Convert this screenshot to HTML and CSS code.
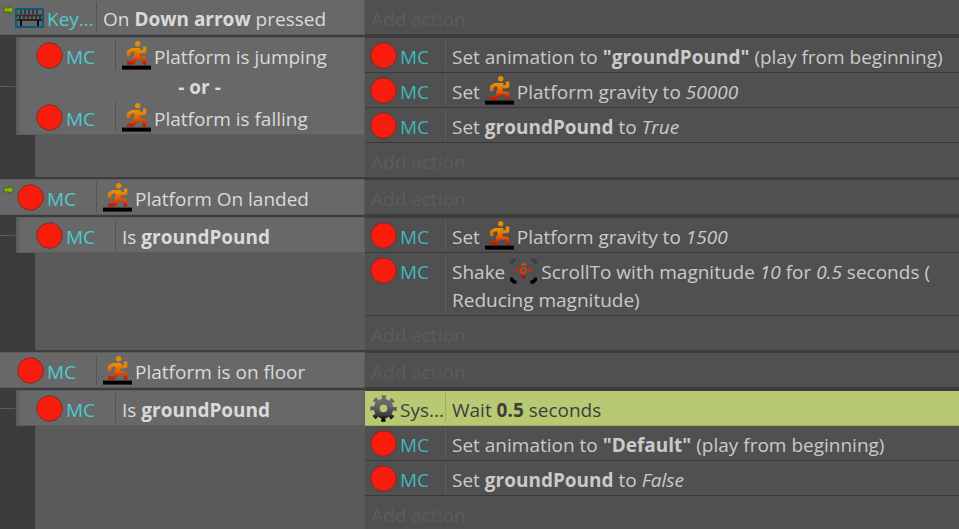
FILE: index.html
```
<!DOCTYPE html>
<html lang="en">
<head>
    <meta charset="UTF-8">
    <meta name="viewport" content="width=device-width, initial-scale=1.0">
    <title>Event Sheet</title>
    <link rel="stylesheet" href="styles.css">
</head>
<body>
    <!-- Shared icons -->
    <svg class="icon-defs" aria-hidden="true">
        <defs>
            <linearGradient id="fire" gradientUnits="userSpaceOnUse" x1="0" y1="0" x2="0" y2="25">
                <stop offset="0.35" stop-color="#ea8c00"/>
                <stop offset="0.65" stop-color="#e25a00"/>
                <stop offset="0.95" stop-color="#c40800"/>
            </linearGradient>
            <linearGradient id="steel" gradientUnits="userSpaceOnUse" x1="0" y1="0" x2="0" y2="27">
                <stop offset="0" stop-color="#6c6c6c"/>
                <stop offset="0.4" stop-color="#666"/>
                <stop offset="0.75" stop-color="#3c3c3c"/>
                <stop offset="0.9" stop-color="#000"/>
            </linearGradient>
            <linearGradient id="leaf" x1="0" y1="0" x2="0" y2="1">
                <stop offset="0" stop-color="#a4d400"/>
                <stop offset="1" stop-color="#6a9c00"/>
            </linearGradient>
        </defs>
        <symbol id="ball" viewBox="0 0 27 27">
            <circle cx="13.5" cy="13.5" r="12.8" fill="#f81c0c" stroke="#5c3030" stroke-width="0.8"/>
        </symbol>
        <symbol id="run" viewBox="0 0 29 29">
            <rect x="0" y="24.6" width="29" height="4" fill="#000"/>
            <g fill="none" stroke="url(#fire)" stroke-width="3.4" stroke-linejoin="round">
                <path d="M22.6 5.6V10.4L17 11"/>
                <path d="M6.6 15.2V10.8L9.6 8.8H18"/>
                <path d="M14 16.8L22.4 17.4V23.4"/>
                <path d="M12.8 15V19.6L10.8 21.8H5"/>
            </g>
            <path d="M11.4 7.2H18.6L17 12.6L18.4 17.4H11.2L12.6 12.6Z" fill="url(#fire)"/>
            <circle cx="15.7" cy="2.8" r="2.7" fill="#e88a00"/>
        </symbol>
        <symbol id="keyboard" viewBox="0 0 29 20">
            <rect x="1" y="1" width="27" height="18" rx="1" fill="#666" stroke="#075a78" stroke-width="2"/>
            <path d="M6 2V6M10 2V6M14 2V6M18 2V6M22 2V6" stroke="#262626" stroke-width="1.4"/>
            <path d="M2 7.4H27" stroke="#303030" stroke-width="2"/>
            <path d="M5 8V12M9 8V12M13 8V12M17 8V12M21 8V12M25 8V12" stroke="#262626" stroke-width="1.4"/>
            <path d="M2 12H27" stroke="#181818" stroke-width="1.6"/>
            <path d="M6 12V18M23 12V18" stroke="#0c0c0c" stroke-width="2"/>
        </symbol>
        <symbol id="arrow" viewBox="0 0 12 10">
            <path d="M1 3H6V1L11 5L6 9V7H1Z" fill="url(#leaf)" stroke="#46621a" stroke-width="1"/>
        </symbol>
        <symbol id="scroll" viewBox="0 0 27 27">
            <g fill="none" stroke-width="2.6">
                <path d="M1.5 6V4L4 1.8H6M21 1.8H23L25.5 4V6" stroke="#3c3c3c"/>
                <path d="M1.5 19.5V21.5L4 24H6.5M20.5 24H23L25.5 21.5V19.5" stroke="#000" stroke-width="3.4"/>
            </g>
            <circle cx="13.5" cy="12.5" r="2.6" fill="none" stroke="#e03800" stroke-width="1.8"/>
            <path d="M13.5 4L16.5 7.2H10.5Z" fill="#e05000"/>
            <path d="M13.5 21.2L16.5 18H10.5Z" fill="#c80000"/>
            <path d="M5 12.5L8.2 9.8V15.2ZM22 12.5L18.8 9.8V15.2Z" fill="#d82800"/>
        </symbol>
        <symbol id="gear" viewBox="0 0 27 27">
            <g fill="none" stroke="url(#steel)">
                <circle cx="13.5" cy="13.5" r="6.8" stroke-width="6"/>
                <circle cx="13.5" cy="13.5" r="11.2" stroke-width="4" stroke-dasharray="4.2 4.6" stroke-dashoffset="2.1"/>
            </g>
        </symbol>
    </svg>

    <main class="sheet">
        <section class="event">
            <div class="conditions">
                <div class="condition">
                    <svg class="trigger"><use href="#arrow"/></svg>
                    <div class="object"><svg class="icon keyboard"><use href="#keyboard"/></svg>Key...</div>
                    <div class="text">On <b>Down arrow</b> pressed</div>
                </div>
            </div>
            <div class="actions">
                <button class="add" type="button">Add action</button>
            </div>
        </section>

        <section class="event sub">
            <div class="side">
                <div class="branch">
                    <div class="conditions">
                        <div class="condition">
                            <div class="object"><svg class="icon"><use href="#ball"/></svg>MC</div>
                            <div class="text"><svg class="inline run"><use href="#run"/></svg>Platform is jumping</div>
                        </div>
                        <div class="or">- or -</div>
                        <div class="condition">
                            <div class="object"><svg class="icon"><use href="#ball"/></svg>MC</div>
                            <div class="text"><svg class="inline run"><use href="#run"/></svg>Platform is falling</div>
                        </div>
                    </div>
                </div>
            </div>
            <div class="actions">
                <div class="action">
                    <div class="object"><svg class="icon"><use href="#ball"/></svg>MC</div>
                    <div class="text">Set animation to <b>"groundPound"</b> (play from beginning)</div>
                </div>
                <div class="action">
                    <div class="object"><svg class="icon"><use href="#ball"/></svg>MC</div>
                    <div class="text">Set <svg class="inline run"><use href="#run"/></svg>Platform gravity to <i>50000</i></div>
                </div>
                <div class="action">
                    <div class="object"><svg class="icon"><use href="#ball"/></svg>MC</div>
                    <div class="text">Set <b>groundPound</b> to <i>True</i></div>
                </div>
                <button class="add" type="button">Add action</button>
            </div>
        </section>

        <section class="event">
            <div class="conditions">
                <div class="condition">
                    <svg class="trigger"><use href="#arrow"/></svg>
                    <div class="object"><svg class="icon"><use href="#ball"/></svg>MC</div>
                    <div class="text"><svg class="inline run"><use href="#run"/></svg>Platform On landed</div>
                </div>
            </div>
            <div class="actions">
                <button class="add" type="button">Add action</button>
            </div>
        </section>

        <section class="event sub">
            <div class="side">
                <div class="branch">
                    <div class="conditions">
                        <div class="condition">
                            <div class="object"><svg class="icon"><use href="#ball"/></svg>MC</div>
                            <div class="text">Is <b>groundPound</b></div>
                        </div>
                    </div>
                </div>
            </div>
            <div class="actions">
                <div class="action">
                    <div class="object"><svg class="icon"><use href="#ball"/></svg>MC</div>
                    <div class="text">Set <svg class="inline run"><use href="#run"/></svg>Platform gravity to <i>1500</i></div>
                </div>
                <div class="action">
                    <div class="object"><svg class="icon"><use href="#ball"/></svg>MC</div>
                    <div class="text">Shake <svg class="inline scroll"><use href="#scroll"/></svg>ScrollTo with magnitude <i>10</i> for <i>0.5</i> seconds (<wbr>Reducing magnitude)</div>
                </div>
                <button class="add" type="button">Add action</button>
            </div>
        </section>

        <section class="event">
            <div class="conditions">
                <div class="condition">
                    <div class="object"><svg class="icon"><use href="#ball"/></svg>MC</div>
                    <div class="text"><svg class="inline run"><use href="#run"/></svg>Platform is on floor</div>
                </div>
            </div>
            <div class="actions">
                <button class="add" type="button">Add action</button>
            </div>
        </section>

        <section class="event sub">
            <div class="side">
                <div class="branch">
                    <div class="conditions">
                        <div class="condition">
                            <div class="object"><svg class="icon"><use href="#ball"/></svg>MC</div>
                            <div class="text">Is <b>groundPound</b></div>
                        </div>
                    </div>
                </div>
            </div>
            <div class="actions">
                <div class="action selected">
                    <div class="object"><svg class="icon"><use href="#gear"/></svg>Sys...</div>
                    <div class="text">Wait <b>0.5</b> seconds</div>
                </div>
                <div class="action">
                    <div class="object"><svg class="icon"><use href="#ball"/></svg>MC</div>
                    <div class="text">Set animation to <b>"Default"</b> (play from beginning)</div>
                </div>
                <div class="action">
                    <div class="object"><svg class="icon"><use href="#ball"/></svg>MC</div>
                    <div class="text">Set <b>groundPound</b> to <i>False</i></div>
                </div>
                <button class="add" type="button">Add action</button>
            </div>
        </section>
    </main>
</body>
</html>
```
FILE: styles.css
```
* {
    box-sizing: border-box;
}
body {
    margin: 0;
    overflow: hidden;
    background-color: #3c3c3c;
    font-family: "Segoe UI", "Open Sans", sans-serif;
    font-size: 19px;
    line-height: 28px;
    color: #dadada;
}
.icon-defs {
    position: absolute;
    width: 0;
    height: 0;
}
.sheet {
    display: flex;
    flex-direction: column;
    gap: 2px;
}
.event {
    display: grid;
    grid-template-columns: 365px 1fr;
}
.conditions {
    flex: 1;
    background-color: #686868;
    border: 1px solid #5c5c5c;
    border-left: 0;
}
.event:first-child .conditions,
.event:first-child .actions {
    border-top: 0;
}
.condition,
.action {
    display: flex;
    padding: 2px 0;
    min-height: 34px;
}
.condition {
    position: relative;
    padding-left: 17px;
}
.trigger {
    position: absolute;
    left: 3px;
    top: 5px;
    width: 12px;
    height: 10px;
}
.object {
    display: flex;
    align-items: flex-start;
    flex: none;
    gap: 3px;
    width: 80px;
    padding-top: 4px;
    border-right: 1px solid #545454;
    line-height: 26px;
    color: #4ccccf;
    white-space: nowrap;
}
.icon {
    flex: none;
    width: 27px;
    height: 27px;
    margin-top: -2px;
}
.icon.keyboard {
    width: 29px;
    height: 20px;
    margin: 2px 0 0 -2px;
}
.text {
    margin-bottom: -1px;
    padding: 3px 0 0 6px;
}
.inline {
    width: 29px;
    height: 29px;
    margin: -4px 3px -4px 0;
    vertical-align: -2px;
}
.inline.scroll {
    width: 27px;
    height: 27px;
    margin-right: 4px;
}

/* Sub-events */
.side {
    display: flex;
    flex-direction: column;
    background: linear-gradient(to right, #3c3c3c 35px, #5a5a5a 35px);
}
.branch {
    display: flex;
    align-items: center;
    background-color: #3c3c3c;
}
.branch::before {
    content: "";
    width: 15px;
    height: 1px;
    margin-right: 1px;
    background-color: #5c5c5c;
}
.sub .conditions {
    border-left: 3px solid #5c5c5c;
}
.or {
    height: 28px;
    padding: 1px 0 0 16px;
    text-align: center;
    font-weight: bold;
}

/* Actions */
.actions {
    display: flex;
    flex-direction: column;
    border-top: 1px solid #3c3c3c;
    color: #cacaca;
}
.action,
.add {
    background-color: #505050;
}
.action {
    min-height: 35px;
    padding-left: 5px;
    border-bottom: 1px solid #3a3a3a;
}
.action .object {
    width: 76px;
    border-color: #5e5e5e;
    color: #3eb8bb;
}
.action.selected {
    background-color: #b8c973;
    border-color: #9fb04c;
    color: #3e3e3e;
}
.action.selected .object {
    border-color: #9fb04c;
    color: #3e3e3e;
}
.add {
    height: 34px;
    padding: 3px 6px 0;
    border: 0;
    font: inherit;
    text-align: left;
    color: #5c5c5c;
    cursor: pointer;
}
.add:hover {
    color: #cacaca;
}
```
